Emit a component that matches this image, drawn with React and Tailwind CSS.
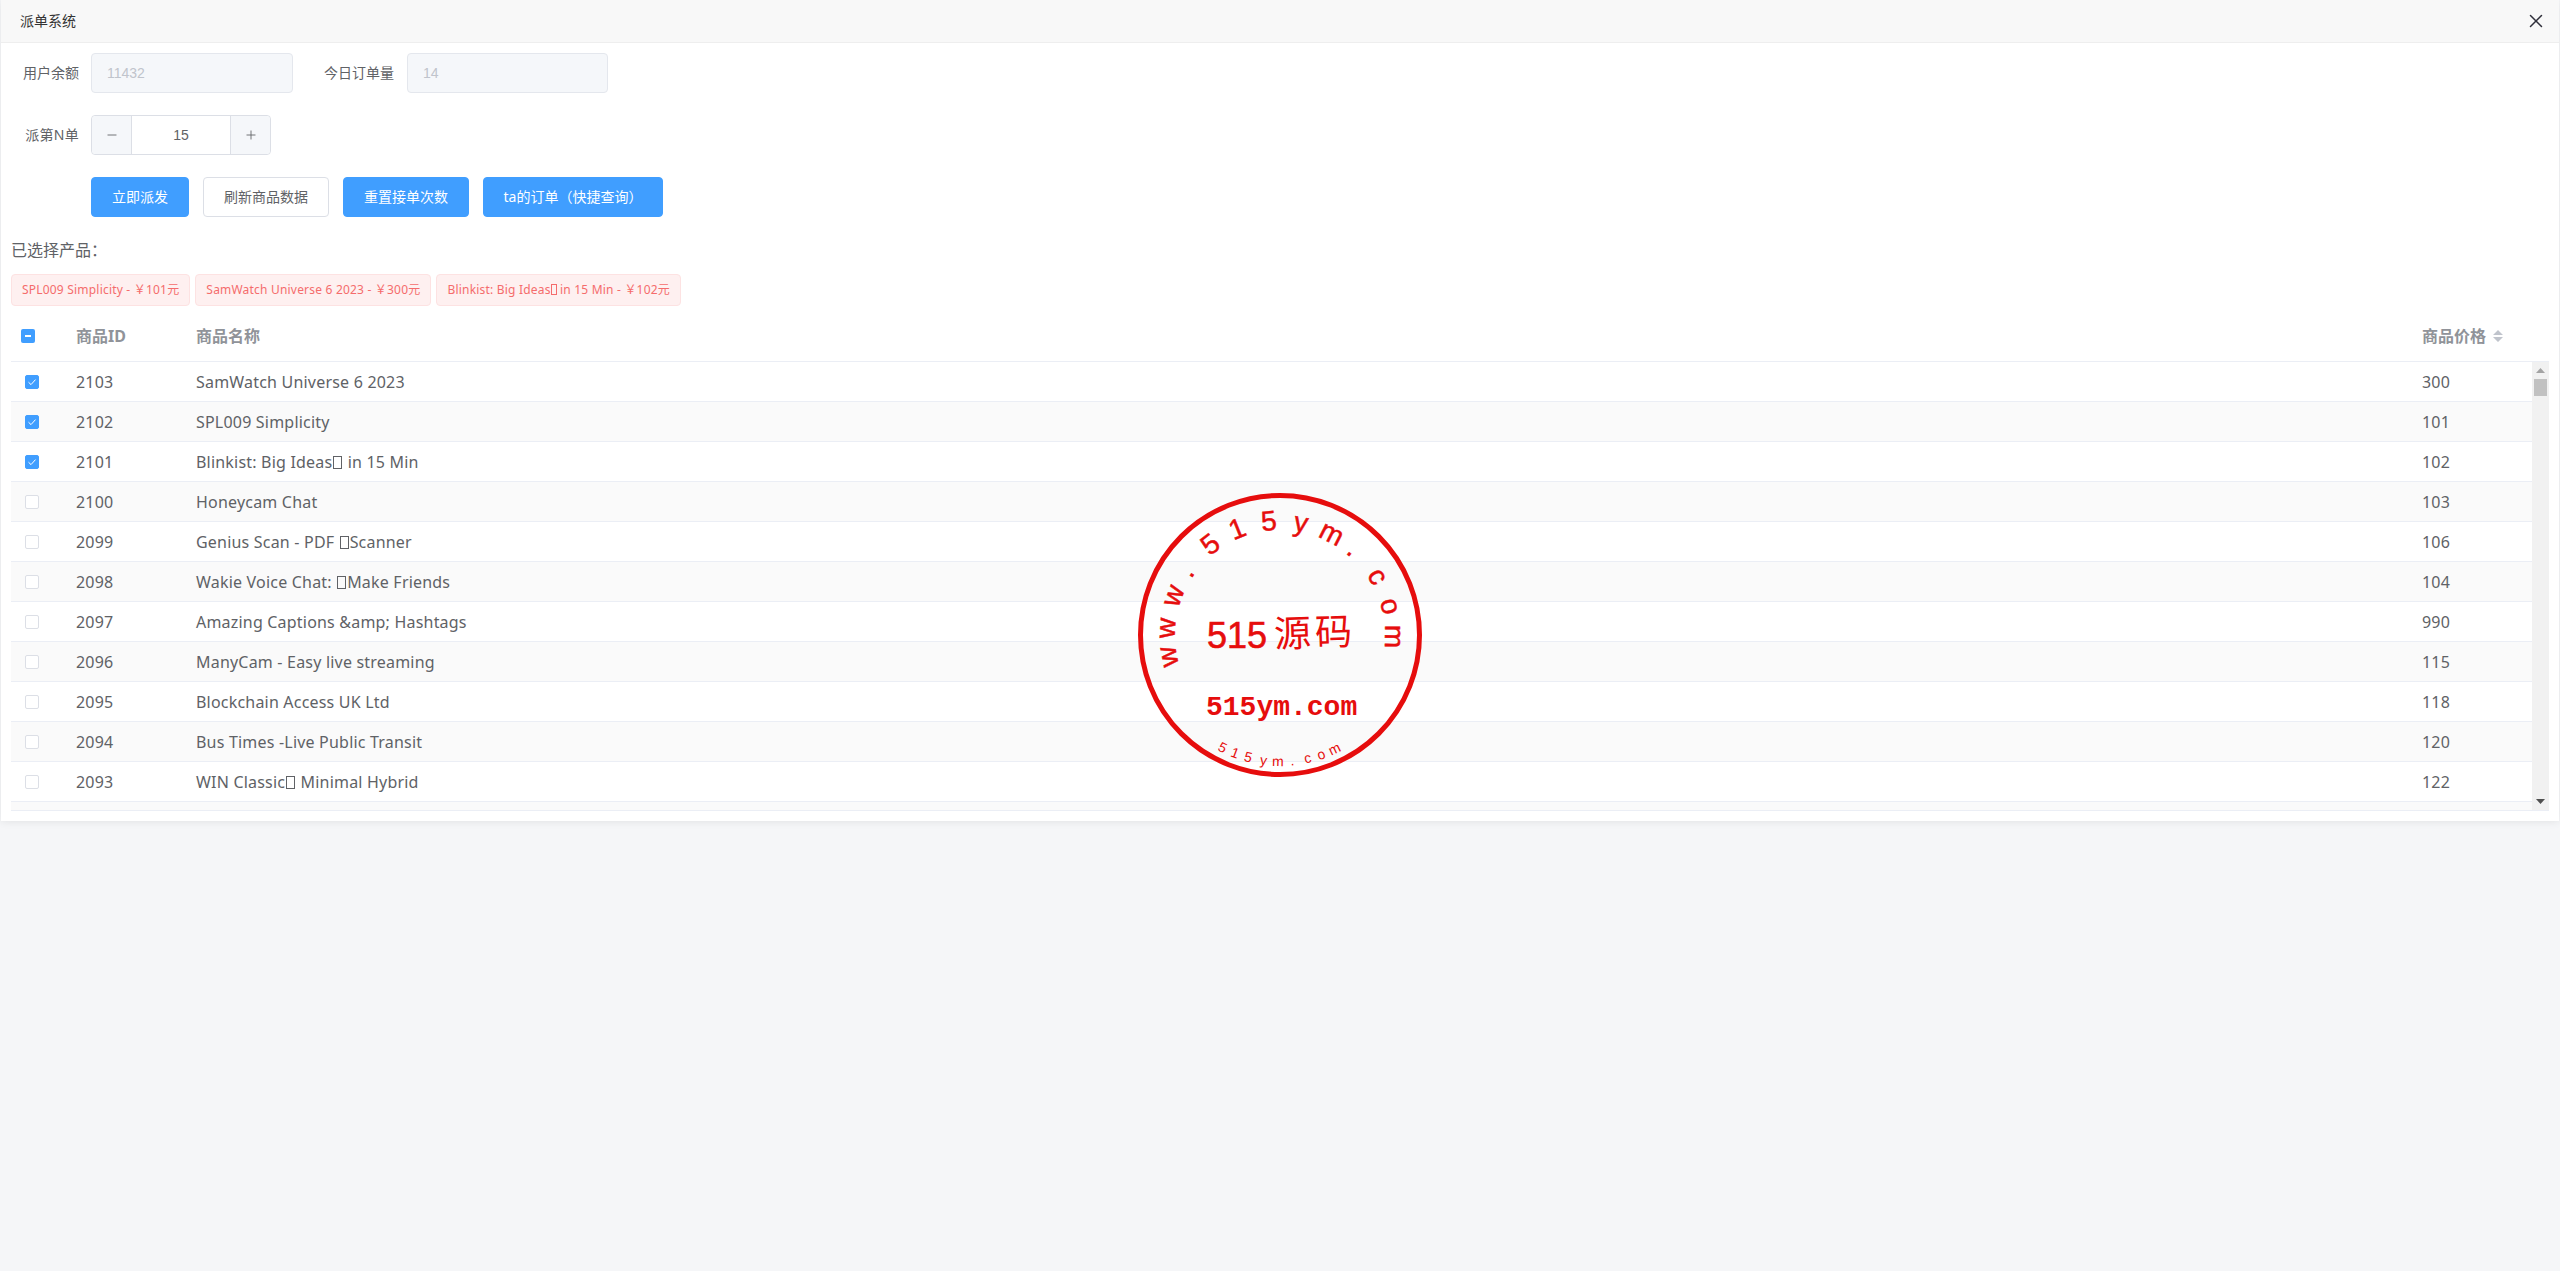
import { Minus, Plus, X } from "lucide-react";

const rows = [
  { id: 2103, name: "SamWatch Universe 6 2023", price: 300, checked: true },
  { id: 2102, name: "SPL009 Simplicity", price: 101, checked: true },
  { id: 2101, name: "Blinkist: Big Ideas□ in 15 Min", price: 102, checked: true },
  { id: 2100, name: "Honeycam Chat", price: 103 },
  { id: 2099, name: "Genius Scan - PDF □Scanner", price: 106 },
  { id: 2098, name: "Wakie Voice Chat: □Make Friends", price: 104 },
  { id: 2097, name: "Amazing Captions &amp; Hashtags", price: 990 },
  { id: 2096, name: "ManyCam - Easy live streaming", price: 115 },
  { id: 2095, name: "Blockchain Access UK Ltd", price: 118 },
  { id: 2094, name: "Bus Times -Live Public Transit", price: 120 },
  { id: 2093, name: "WIN Classic□ Minimal Hybrid", price: 122 },
];

const tags = [
  "SPL009 Simplicity - ￥101元",
  "SamWatch Universe 6 2023 - ￥300元",
  "Blinkist: Big Ideas□ in 15 Min - ￥102元",
];

const topArc = [
  ["w", -101], ["w", -86.6], ["w", -69.8], [".", -55.8], ["5", -37.6], ["1", -22], ["5", -5.6],
  ["y", 10.6], ["m", 27], [".", 40.5], ["c", 59], ["o", 75.4], ["m", 90.8],
];

const bottomArc = [
  ["5", -27], ["1", -20.9], ["5", -14.6], ["y", -7.5], ["m", -1], [".", 5.5], ["c", 12.6], ["o", 19], ["m", 25.6],
];

// the source text has a character the font lacks, so it shows as a narrow empty box
function Name({ text, boxClass }) {
  const parts = text.split("□");
  if (parts.length === 1) return text;
  return (
    <>
      {parts[0]}
      <span className={`inline-block border border-current align-[-1px] ${boxClass}`} />
      {parts[1]}
    </>
  );
}

function Checkbox({ checked }) {
  return (
    <span
      className={`flex h-[14px] w-[14px] items-center justify-center rounded-[2px] border ${
        checked ? "border-[#409eff] bg-[#409eff]" : "border-[#dcdfe6] bg-white"
      }`}
    >
      {checked && (
        <svg width="12" height="12" viewBox="0 0 12 12" fill="none" stroke="white" strokeWidth="1">
          <path d="M2.5 6.2 L5 8.6 L9.5 3.6" />
        </svg>
      )}
    </span>
  );
}

function Stamp() {
  return (
    <svg
      className="pointer-events-none absolute left-[1129px] top-[485px]"
      width="300"
      height="300"
      viewBox="-150 -150 300 300"
      fill="#e60d0d"
    >
      <circle cx="0" cy="0" r="139.5" fill="none" stroke="#e60d0d" strokeWidth="5" />
      {topArc.map(([ch, angle], i) => (
        <text
          key={i}
          transform={`rotate(${angle}) translate(0 -105)`}
          textAnchor="middle"
          fontFamily="Liberation Sans"
          fontSize="28"
          stroke="#e60d0d"
          strokeWidth="0.5"
        >
          {ch}
        </text>
      ))}
      {bottomArc.map(([ch, angle], i) => (
        <text
          key={i}
          transform={`rotate(${-angle}) translate(0 131)`}
          textAnchor="middle"
          fontFamily="Liberation Sans"
          fontSize="14"
        >
          {ch}
        </text>
      ))}
      <text x="-73" y="13" fontFamily="Liberation Sans" fontSize="36" stroke="#e60d0d" strokeWidth="0.6">
        515
      </text>
      <text x="-6" y="12" fontFamily="Noto Sans CJK SC" fontSize="37" letterSpacing="4" transform="rotate(-2)">
        源码
      </text>
      <text x="-74" y="80" fontFamily="Liberation Mono" fontSize="28" fontWeight="700">
        515ym.com
      </text>
    </svg>
  );
}

function FakeScrollbar() {
  return (
    <div className="flex w-[17px] flex-col items-center bg-[#f1f1f1]">
      <svg className="mt-[6px]" width="9" height="5" viewBox="0 0 9 5" fill="#a3a3a3">
        <path d="M4.5 0 L9 5 L0 5 Z" />
      </svg>
      <div className="mt-[6px] h-[17px] w-[13px] bg-[#c1c1c1]" />
      <div className="flex-1" />
      <svg className="mb-[6px]" width="9" height="5" viewBox="0 0 9 5" fill="#505050">
        <path d="M0 0 L9 0 L4.5 5 Z" />
      </svg>
    </div>
  );
}

export default function App() {
  return (
    <div className="min-h-screen bg-[#f5f6f8] font-['Noto_Sans','Noto_Sans_CJK_SC',sans-serif]">
      <div className="relative mx-px h-[821px] bg-white shadow-[0_1px_8px_rgba(0,0,0,0.08)]">
        <div className="flex h-[43px] items-center justify-between border-b border-[#eeeeee] bg-[#f8f8f8] pl-[19px] pr-[12px] text-sm text-[#333333]">
          <span>派单系统</span>
          <X size={22} strokeWidth={1.6} color="#2f2f3a" />
        </div>

        <div className="mt-[10px] flex items-center text-sm text-[#606266]">
          <label className="w-[78px] text-right">用户余额</label>
          <input
            disabled
            value="11432"
            className="ml-3 h-10 w-[202px] rounded border border-[#e4e7ed] bg-[#f5f7fa] px-[15px] font-['Liberation_Sans'] text-[#c0c4cc]"
          />
          <label className="ml-[31px]">今日订单量</label>
          <input
            disabled
            value="14"
            className="ml-[13px] h-10 w-[201px] rounded border border-[#e4e7ed] bg-[#f5f7fa] px-[15px] font-['Liberation_Sans'] text-[#c0c4cc]"
          />
        </div>

        <div className="mt-[22px] flex items-center text-sm text-[#606266]">
          <label className="w-[78px] text-right tracking-[0.3px]">派第N单</label>
          <div className="ml-3 flex h-10 w-[180px] rounded border border-[#dcdfe6] bg-white">
            <button className="flex w-10 items-center justify-center rounded-l border-r border-[#dcdfe6] bg-[#f5f7fa]">
              <Minus size={14} strokeWidth={1.5} />
            </button>
            <span className="flex flex-1 items-center justify-center font-['Liberation_Sans']">15</span>
            <button className="flex w-10 items-center justify-center rounded-r border-l border-[#dcdfe6] bg-[#f5f7fa]">
              <Plus size={14} strokeWidth={1.5} />
            </button>
          </div>
        </div>

        <div className="ml-[90px] mt-[22px] flex gap-[14px] text-sm">
          <button className="h-10 rounded border border-[#409eff] bg-[#409eff] px-5 text-white">立即派发</button>
          <button className="h-10 rounded border border-[#dcdfe6] bg-white px-5 text-[#606266]">刷新商品数据</button>
          <button className="h-10 rounded border border-[#409eff] bg-[#409eff] px-5 text-white">重置接单次数</button>
          <button className="h-10 w-[180px] rounded border border-[#409eff] bg-[#409eff] text-white">ta的订单（快捷查询）</button>
        </div>

        <div className="px-[10px]">
          <div className="mt-[21px] h-6 text-base leading-6 text-[#606266]">已选择产品：</div>

          <div className="mt-3 flex gap-[5px]">
            {tags.map((tag) => (
              <span
                key={tag}
                className="flex h-8 items-center whitespace-pre rounded border border-[#fde2e2] bg-[#fef0f0] px-[10px] text-xs tracking-[0.2px] text-[#f56c6c]"
              >
                <span>
                  <Name text={tag} boxClass="h-[11px] w-[6px]" />
                </span>
              </span>
            ))}
          </div>

          <div className="mt-[7px] grid h-[49px] grid-cols-[65px_120px_1fr_127px] items-center border-b border-[#ebeef5] pb-[2px] text-base font-bold text-[#909399]">
            <span className="pl-[10px]">
              <span className="flex h-[14px] w-[14px] items-center justify-center rounded-[2px] bg-[#409eff]">
                <span className="h-[2px] w-[6px] bg-white" />
              </span>
            </span>
            <span>商品ID</span>
            <span>商品名称</span>
            <span className="flex items-center gap-[7px]">
              商品价格
              <svg width="10" height="12" viewBox="0 0 10 12" fill="#c0c4cc">
                <path d="M5 0 L10 5 L0 5 Z M0 7 L10 7 L5 12 Z" />
              </svg>
            </span>
          </div>

          <div className="flex h-[449px] border-b border-[#ebeef5]">
            <div className="flex flex-1 flex-col text-base tracking-[0.2px] text-[#606266]">
              {rows.map((row, i) => (
                <div
                  key={row.id}
                  className={`grid h-10 grid-cols-[65px_120px_1fr_110px] items-center border-b border-[#ebeef5] ${
                    i % 2 === 1 ? "bg-[#fafafa]" : "bg-white"
                  }`}
                >
                  <span className="pl-[14px]">
                    <Checkbox checked={row.checked} />
                  </span>
                  <span>{row.id}</span>
                  <span>
                    <Name text={row.name} boxClass="mx-px h-[13px] w-[9px]" />
                  </span>
                  <span>{row.price}</span>
                </div>
              ))}
              <div className="flex-1 bg-[#fafafa]" />
            </div>
            <FakeScrollbar />
          </div>
        </div>

        <Stamp />
      </div>
    </div>
  );
}
